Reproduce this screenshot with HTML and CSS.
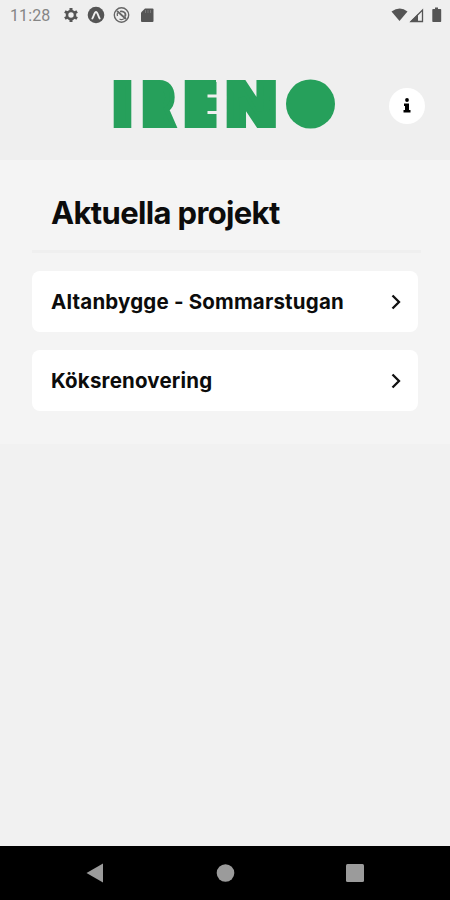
FILE: index.html
```html
<!DOCTYPE html>
<html lang="sv">
<head>
  <meta charset="UTF-8" />
  <meta name="viewport" content="width=device-width, initial-scale=1.0"/>
  <title>Ireno</title>
  <link rel="stylesheet" href="styles.css">
</head>
<body>

<div class="phone">
  <div class="status-bar">
    <span class="clock">11:28</span>
    <svg class="status-icons" width="94" height="18" viewBox="0 0 94 18">
      <g fill="none" stroke="#555">
        <circle cx="8" cy="9" r="4" stroke-width="2.6"/>
        <path d="M8 2v3M8 13v3M1.9 5.5l2.6 1.5M11.5 11l2.6 1.5M1.9 12.5L4.5 11M11.5 7l2.6-1.5" stroke-width="3"/>
      </g>
      <circle cx="33" cy="9" r="8.3" fill="#555"/>
      <path d="M29.3 12.5c1.5-2 2-6.5 3.7-6.5s2.2 4.5 3.7 6.5" fill="none" stroke="#eee" stroke-width="1.8" stroke-linecap="round"/>
      <g fill="none" stroke="#666">
        <circle cx="58.5" cy="9" r="7.2" stroke-width="1.4"/>
        <path d="M54.5 10a4.5 4.5 0 0 1 0-3M62.5 11a4.5 4.5 0 0 1-6 2" stroke-width="1.3"/>
        <path d="M54 5l9 8M57 5.5c4-1 6.5 2 5 5" stroke-width="1.8"/>
      </g>
      <path d="M82 2.5h7.5q1 0 1 1v11.5q0 1-1 1h-10.5q-1 0-1-1V6.5z" fill="#555"/>
      <path d="M82.5 4v3M85 4v3M87.5 4v3" stroke="#777" stroke-width="1"/>
    </svg>
    <svg class="signal-icons" width="52" height="18" viewBox="0 0 52 18">
      <path d="M1.5 5.5q8.5-6 16 0L9.5 15z" fill="#555"/>
      <path d="M21 15.5L32.5 4v11.5z" fill="none" stroke="#555" stroke-width="1.3"/>
      <path d="M20 16L28 8V16z" fill="#555"/>
      <path d="M43 3h2V1.5h3V3h2.5q.7 0 .7.7v11.6q0 .7-.7.7H43q-.7 0-.7-.7V3.7q0-.7.7-.7z" fill="#555"/>
    </svg>
  </div>

  <header class="header">
    <svg class="logo" width="224" height="92" viewBox="0 -20 224 92" role="img" aria-label="IRENO">
      <g class="logo-text">
        <text x="1" y="47" textLength="17" lengthAdjust="spacingAndGlyphs">I</text>
        <text x="30" y="47" textLength="31" lengthAdjust="spacingAndGlyphs">R</text>
        <text x="72" y="47" textLength="30.5" lengthAdjust="spacingAndGlyphs">E</text>
        <text x="114" y="47" textLength="48.5" lengthAdjust="spacingAndGlyphs">N</text>
        <text class="logo-o" x="197.5" y="41">O</text>
      </g>
      <!-- solid counters of the stencil letters -->
      <g fill="#26a05b">
        <rect x="34" y="4" width="16" height="46"/>
        <rect x="78" y="4" width="25.5" height="46"/>
        <circle cx="197.5" cy="26" r="24.5"/>
      </g>
      <g fill="#efefef">
        <rect x="94.5" y="16.5" width="10" height="3"/>
        <rect x="94.5" y="33" width="10" height="3"/>
      </g>
    </svg>
    <button class="info-btn" aria-label="Info">
      <svg width="10" height="16" viewBox="0 0 10 16">
        <circle cx="5" cy="2" r="1.9"/>
        <path d="M2 5.5h5v6.5h1.5v2.5h-7V12H3V8H2z"/>
      </svg>
    </button>
  </header>

  <main class="projects">
    <h1>Aktuella projekt</h1>
    <a class="project">
      <span>Altanbygge - Sommarstugan</span>
      <svg class="chevron" width="10" height="16" viewBox="0 0 10 16"><path d="M1.5 1.5L8 8l-6.5 6.5"/></svg>
    </a>
    <a class="project">
      <span>Köksrenovering</span>
      <svg class="chevron" width="10" height="16" viewBox="0 0 10 16"><path d="M1.5 1.5L8 8l-6.5 6.5"/></svg>
    </a>
  </main>

  <nav class="nav-bar">
    <svg width="20" height="20" viewBox="0 0 20 20"><path d="M1.5 10L18 .5v19z"/></svg>
    <svg width="20" height="20" viewBox="0 0 20 20"><circle cx="10.5" cy="10" r="8.8"/></svg>
    <svg width="20" height="20" viewBox="0 0 20 20"><rect x="1" y="1" width="18" height="18" rx="1.5"/></svg>
  </nav>
</div>

</body>
</html>
```
FILE: styles.css
```css
* {
  box-sizing: border-box;
}

body {
  margin: 0;
  font-family: Inter, "Liberation Sans", sans-serif;
  background: #f1f1f1;
  color: #0c0c0c;
}

.phone {
  display: flex;
  flex-direction: column;
  height: 900px;
}

.status-bar {
  display: flex;
  align-items: center;
  height: 30px;
  padding: 0 8px 0 10px;
  background: #efefef;
}

.clock {
  width: 53px;
  font-family: Roboto, sans-serif;
  font-size: 16px;
  letter-spacing: 0.1px;
  color: #858585;
}

.status-icons {
  margin-top: -1px;
}

.signal-icons {
  margin-top: -1px;
  margin-left: auto;
}

.header {
  display: flex;
  align-items: center;
  justify-content: space-between;
  height: 130px;
  padding: 0 25px 0 113px;
  background: #efefef;
}

.logo {
  margin-top: 18px;
  overflow: visible;
}

.logo-text {
  font-family: Inter, sans-serif;
  font-size: 58px;
  font-weight: 900;
  fill: #26a05b;
  stroke: #26a05b;
  stroke-width: 6px;
}

.logo-o {
  font-size: 42px;
  text-anchor: middle;
}

.info-btn {
  display: flex;
  align-items: center;
  justify-content: center;
  width: 36px;
  height: 36px;
  margin-top: 22px;
  padding: 0;
  border: none;
  border-radius: 50%;
  background: #fff;
}

.projects {
  height: 284px;
  padding: 0 32px;
  background: #f4f4f4;
}

h1 {
  height: 93px;
  margin: 0 -3px 18px 0;
  padding: 33px 19px 0;
  border-bottom: 3px solid #efefef;
  font-size: 31px;
  font-weight: 700;
  line-height: 40px;
  letter-spacing: -0.65px;
}

.project {
  display: flex;
  align-items: center;
  justify-content: space-between;
  height: 61px;
  margin-bottom: 18px;
  padding: 0 17px 0 19px;
  border-radius: 8px;
  background: #fff;
  font-size: 20.5px;
  font-weight: 700;
  letter-spacing: 0.18px;
}

.chevron {
  fill: none;
  stroke: #111;
  stroke-width: 2.3px;
}

.nav-bar {
  display: flex;
  align-items: center;
  justify-content: space-between;
  height: 54px;
  margin-top: auto;
  padding: 0 85px;
  background: #000;
  fill: #9b9b9b;
}
```
